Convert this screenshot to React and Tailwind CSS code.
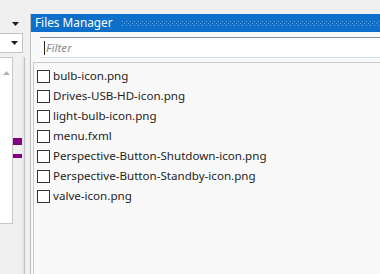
import React from "react";

const files = [
  "bulb-icon.png",
  "Drives-USB-HD-icon.png",
  "light-bulb-icon.png",
  "menu.fxml",
  "Perspective-Button-Shutdown-icon.png",
  "Perspective-Button-Standby-icon.png",
  "valve-icon.png",
];

function DownTriangle({ className = "" }) {
  return (
    <svg width="7" height="4" viewBox="0 0 7 4" className={className}>
      <path d="M0 0h7L3.5 4z" fill="#1e1e1e" />
    </svg>
  );
}

function Grip() {
  // dotted drag area of the tool window caption
  return (
    <svg className="flex-1 h-[18px]" preserveAspectRatio="none">
      <defs>
        <pattern id="grip" width="4" height="4" patternUnits="userSpaceOnUse" x="0" y="7">
          <rect x="0" y="0" width="1" height="1" fill="#6aa6e2" />
          <rect x="2" y="2" width="1" height="1" fill="#6aa6e2" />
        </pattern>
      </defs>
      <rect x="0" y="7" width="100%" height="5" fill="url(#grip)" />
    </svg>
  );
}

export default function App() {
  return (
    <div
      className="w-[380px] h-[274px] overflow-hidden bg-[#f0f0f0] flex flex-col"
      style={{ fontFamily: '"Noto Sans", "Open Sans", sans-serif' }}
    >
      <div className="h-[14px] flex-shrink-0" />
      <div className="flex-1 flex min-h-0">
        {/* Left dock column (cut off) */}
        <div className="w-[30px] flex-shrink-0 flex flex-col">
          <div className="h-[19px] flex items-center pl-[12px]">
            <DownTriangle />
          </div>
          <div className="h-[20px] w-[23px] bg-white border border-l-0 border-[#c4c4c4] flex items-center justify-end pr-[4px]">
            <DownTriangle />
          </div>
          <div className="flex-1 flex pt-[4px]">
            <div className="w-[13px] h-[167px] bg-white border-t border-r border-b border-[#c8c8c8] flex flex-col items-center pt-[13px]">
              <svg width="7" height="4" viewBox="0 0 7 4">
                <path d="M0 4h7L3.5 0z" fill="#b4b4b4" />
              </svg>
            </div>
            <div className="w-[9px] flex flex-col pt-[81px]">
              <div className="h-[7px] bg-[#800080]" />
              <div className="h-[9px]" />
              <div className="h-[4px] bg-[#800080]" />
            </div>
            <div className="w-[3px] bg-[#e6e6e6] border-r border-[#c2c2c2]" />
          </div>
        </div>

        {/* Files Manager tool window */}
        <div className="flex-1 flex flex-col border-l border-[#bdbdbd] min-w-0">
          <div className="h-[18px] bg-[#0e6fcb] flex items-center flex-shrink-0">
            <span className="text-white text-[11.8px] leading-none pl-[4px] pr-[9px] whitespace-nowrap">
              Files Manager
            </span>
            <Grip />
          </div>
          <div className="flex-1 bg-[#f9f9f9] flex flex-col min-h-0">
            <div className="ml-[9px] mt-[5px] h-[21px] bg-white border-t border-t-[#7d8d9b] border-b border-b-[#d5e1ea] flex items-center pl-[4px]">
              <div className="w-px h-[14px] bg-[#1e1e1e]" />
              <span className="italic text-[11.6px] text-[#8a8a8a] pl-[1px]">Filter</span>
            </div>
            <div className="ml-[2px] mt-[4px] flex-1 border-t border-l border-[#c9c9c9] pt-[3px]">
              {files.map((f) => (
                <div key={f} className="h-[20px] flex items-center pl-[3px] gap-[3px]">
                  <div className="w-[13px] h-[13px] bg-white border border-[#333333] flex-shrink-0" />
                  <span className="text-[11.6px] text-[#1e1e1e] whitespace-nowrap leading-none">{f}</span>
                </div>
              ))}
            </div>
          </div>
        </div>
      </div>
    </div>
  );
}
